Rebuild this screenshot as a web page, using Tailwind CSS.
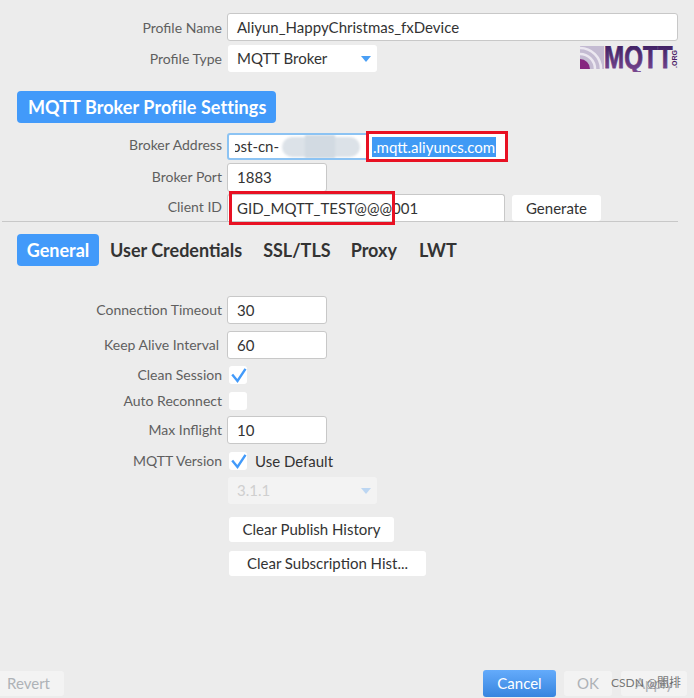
<!DOCTYPE html>
<html lang="en">

<head>
    <meta charset="UTF-8">
    <title>MQTT Broker Profile</title>
    <script src="https://cdn.jsdelivr.net/npm/@tailwindcss/browser@4"></script>
</head>

<body class="bg-[#ececec] font-['Lato','Noto_Sans_CJK_SC',sans-serif] text-[15px] text-[#333]">
    <div class="relative w-[694px] h-[698px] overflow-hidden">
        <!-- Profile -->
        <div class="pt-[13px] grid grid-cols-[222px_1fr] gap-x-[5px] pr-4 items-center">
            <label class="text-right text-[14px] text-[#5f5f5f]">Profile Name</label>
            <div class="h-[28px] w-[451px] bg-white rounded-[3px] border border-[#c8c8c8] px-[9px] leading-[26px]">Aliyun_HappyChristmas_fxDevice</div>
            <label class="text-right text-[14px] text-[#5f5f5f] mt-1">Profile Type</label>
            <div class="mt-1 flex justify-between items-start">
                <div class="ml-px h-[27px] w-[149px] bg-white rounded-[3px] px-[9px] leading-[27px] flex items-center justify-between">
                    <span>MQTT Broker</span>
                    <span class="w-0 h-0 border-x-[5px] border-x-transparent border-t-[6px] border-t-[#4a9ff5] mr-[-3px]"></span>
                </div>
                <svg class="mr-[-1px] mt-px" width="99" height="26" viewBox="0 0 99 26">
                    <defs>
                        <linearGradient id="logoText" x1="0" y1="0" x2="0" y2="1">
                            <stop offset="0" stop-color="#351a5c" />
                            <stop offset="1" stop-color="#7d4a94" />
                        </linearGradient>
                    </defs>
                    <rect width="24" height="23" fill="#c4bbd2" />
                    <path d="M0 2A21 21 0 0 1 21 23M0 8A15 15 0 0 1 15 23" fill="none" stroke="#ece8f1" stroke-width="2.5" />
                    <path d="M0 13A10 10 0 0 1 10 23H0Z" fill="#86267f" />
                    <text transform="translate(24 22) scale(.78 1)" font-family="Liberation Sans" font-weight="700" font-size="31" fill="url(#logoText)" stroke="url(#logoText)" stroke-width=".8">MQTT</text>
                    <text transform="translate(97 22) rotate(-90)" font-family="Liberation Sans" font-weight="700" font-size="7" fill="#4b1c67">.ORG</text>
                </svg>
            </div>
        </div>

        <div class="ml-[17px] mt-[19px] w-[259px] h-[32px] rounded-[4px] bg-[#429afa] text-white text-[18px] font-bold tracking-[.07px] leading-[32px] px-[11px] whitespace-nowrap">MQTT Broker Profile Settings</div>

        <!-- Broker -->
        <div class="mt-[10px] grid grid-cols-[222px_1fr] gap-x-[5px] items-start">
            <label class="text-right text-[14px] text-[#5f5f5f] leading-[23px]">Broker Address</label>
            <div class="relative w-[143px] h-[27px] bg-white border-2 border-[#8cc3f3] rounded-[3px] leading-[23px] overflow-hidden whitespace-nowrap">
                <div class="ml-[6px] overflow-hidden w-[46px]"><span class="block ml-[-3px]">ost-cn-</span></div>
                <div class="absolute left-[53px] top-[2px] w-[78px] h-[20px] rounded-[10px] bg-[#dce2e8] blur-[1px]"></div>
                <div class="absolute left-[76px] top-0 w-[30px] h-[23px] bg-[#d2dae2] blur-[1px]"></div>
            </div>
            <label class="mt-[3px] text-right text-[14px] text-[#5f5f5f] leading-[27px]">Broker Port</label>
            <div class="mt-[3px] w-[100px] h-[29px] bg-white border border-[#c8c8c8] rounded-[3px] px-[9px] leading-[27px]">1883</div>
            <label class="mt-[2px] text-right text-[14px] text-[#5f5f5f] leading-[26px]">Client ID</label>
            <div class="mt-[2px] flex gap-[7px] h-[27px]">
                <div class="w-[278px] h-[27px] bg-white border border-b-0 border-[#c8c8c8] rounded-t-[3px] px-[9px] leading-[27px]">GID_MQTT_TEST@@@001</div>
                <button class="w-[89px] h-[26px] mt-px bg-white rounded-[3px]">Generate</button>
            </div>
        </div>
        <div class="ml-[2px] w-[676px] h-px bg-[#c8c8c8]"></div>

        <!-- Tabs -->
        <div class="ml-[17px] mt-[12px] flex items-center gap-[11px] text-[18px] font-bold">
            <div class="h-[32px] w-[82px] rounded-[4px] bg-[#429afa] text-white text-center leading-[32px]">General</div>
            <div>User Credentials</div>
            <div class="ml-[10px]">SSL/TLS</div>
            <div class="ml-[9px]">Proxy</div>
            <div class="ml-[11px]">LWT</div>
        </div>

        <!-- General -->
        <div class="mt-[30px] grid grid-cols-[222px_1fr] gap-x-[5px] items-center">
            <label class="text-right text-[14px] text-[#5f5f5f] leading-[18px]">Connection Timeout</label>
            <div class="w-[100px] h-[28px] bg-white border border-[#c8c8c8] rounded-[3px] px-[9px] leading-[26px]">30</div>
            <label class="mt-[7px] text-right text-[14px] text-[#5f5f5f] leading-[18px] pr-[3px]">Keep Alive Interval</label>
            <div class="mt-[7px] w-[100px] h-[28px] bg-white border border-[#c8c8c8] rounded-[3px] px-[9px] leading-[26px]">60</div>
            <label class="mt-[7px] text-right text-[14px] text-[#5f5f5f] leading-[18px]">Clean Session</label>
            <div class="mt-[7px] ml-[2px] w-[18px] h-[18px] bg-white rounded-[3px]">
                <svg width="18" height="18" viewBox="0 0 18 18"><path d="M3.2 8.5L8.5 15L16.5 2.8" fill="none" stroke="#429afa" stroke-width="2.4" /></svg>
            </div>
            <label class="mt-[8px] text-right text-[14px] text-[#5f5f5f] leading-[18px]">Auto Reconnect</label>
            <div class="mt-[8px] ml-[2px] w-[18px] h-[18px] bg-white rounded-[3px]"></div>
            <label class="mt-[6px] text-right text-[14px] text-[#5f5f5f] leading-[18px]">Max Inflight</label>
            <div class="mt-[6px] w-[100px] h-[28px] bg-white border border-[#c8c8c8] rounded-[3px] px-[9px] leading-[26px]">10</div>
            <label class="mt-[8px] text-right text-[14px] text-[#5f5f5f] leading-[18px]">MQTT Version</label>
            <div class="mt-[8px] ml-[2px] flex items-center gap-[8px] h-[18px]">
                <div class="w-[18px] h-[18px] bg-white rounded-[3px]">
                    <svg width="18" height="18" viewBox="0 0 18 18"><path d="M3.2 8.5L8.5 15L16.5 2.8" fill="none" stroke="#429afa" stroke-width="2.4" /></svg>
                </div>
                <span>Use Default</span>
            </div>
        </div>
        <div class="ml-[228px] mt-[7px] w-[149px] h-[27px] bg-[#f3f3f3] rounded-[3px] px-[9px] leading-[27px] flex items-center justify-between text-[#cfcfcf]">
            <span>3.1.1</span>
            <span class="w-0 h-0 border-x-[5px] border-x-transparent border-t-[6px] border-t-[#bcd6f2] mr-[-3px]"></span>
        </div>
        <button class="block ml-[229px] mt-[13px] w-[165px] h-[25px] bg-white rounded-[3px]">Clear Publish History</button>
        <button class="block ml-[229px] mt-[9px] w-[197px] h-[25px] bg-white rounded-[3px]">Clear Subscription Hist...</button>

        <!-- Footer -->
        <div class="absolute left-0 right-0 top-[670px] flex items-center pr-[7px]">
            <button class="w-[64px] h-[25px] bg-[#f3f3f3] rounded-r-[3px] text-[#aeb2b7] pr-[7px]">Revert</button>
            <button class="ml-auto w-[73px] h-[27px] rounded-[3px] bg-gradient-to-b from-[#64abfb] to-[#3685df] text-white">Cancel</button>
            <button class="ml-[8px] w-[48px] h-[25px] bg-[#f3f3f3] rounded-[3px] text-[#aeb2b7]">OK</button>
            <button class="ml-[9px] w-[66px] h-[25px] bg-[#f3f3f3] rounded-[3px] text-[#aeb2b7]">Apply</button>
        </div>

        <!-- annotations -->
        <div class="absolute left-[366px] top-[131px] w-[142px] h-[31px] bg-white border-[3px] border-[#e81123] flex items-center">
            <span class="ml-[3px] bg-[#3f9af5] text-white leading-[20px] px-px">.mqtt.aliyuncs.com</span>
        </div>
        <div class="absolute left-[229px] top-[191px] w-[166px] h-[34px] border-[3px] border-[#e81123]"></div>
        <div class="absolute left-[611px] top-[676px] text-[12px] leading-[14px] text-[#555]/80 whitespace-nowrap">CSDN @闇排</div>
    </div>
</body>

</html>
